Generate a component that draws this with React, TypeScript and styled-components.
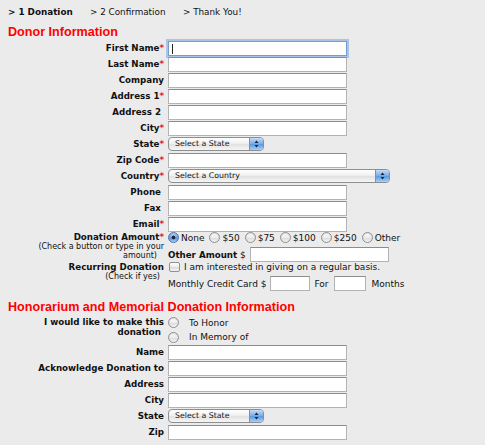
import React from "react";
import styled, { createGlobalStyle } from "styled-components";

const GlobalStyle = createGlobalStyle`
  html, body {
    margin: 0;
    padding: 0;
    background: #ebebeb;
  }
  body {
    font-family: "DejaVu Sans", Verdana, sans-serif;
    color: #111;
  }
`;

const Page = styled.div`
  box-sizing: border-box;
  width: 485px;
  height: 445px;
  overflow: hidden;
  padding: 6px 0 0 8px;
  background: #ebebeb;
`;

const Steps = styled.div`
  display: flex;
  height: 12px;
  line-height: 12px;
  font-size: 8.8px;
`;

const Step = styled.span<{ $active?: boolean; $w?: number }>`
  font-weight: ${(p) => (p.$active ? 700 : 400)};
  width: ${(p) => (p.$w ? `${p.$w}px` : "auto")};
  white-space: nowrap;
`;

const SectionTitle = styled.h2<{ $top?: number }>`
  margin: ${(p) => p.$top ?? 7}px 0 0;
  font: bold 12.6px/15px "Liberation Sans", Arial, sans-serif;
  color: #f00;
`;

const Row = styled.div<{ $align?: string }>`
  display: grid;
  grid-template-columns: 156px auto;
  column-gap: 4px;
  align-items: ${(p) => p.$align ?? "center"};
  min-height: 16px;
`;

const Label = styled.div<{ $pad?: number }>`
  text-align: right;
  font-weight: bold;
  font-size: 8.7px;
  line-height: 10px;
  white-space: nowrap;
  padding-top: ${(p) => p.$pad ?? 0}px;
`;

const Req = styled.span`
  color: #e3262b;
`;

const Note = styled.div<{ $right?: number }>`
  font-weight: normal;
  font-size: 8px;
  line-height: 9px;
  padding-right: ${(p) => p.$right ?? 0}px;
`;

const TextInput = styled.input<{ $w?: number; $focused?: boolean }>`
  box-sizing: border-box;
  display: block;
  width: ${(p) => p.$w ?? 179}px;
  height: 15px;
  margin: 0;
  padding: 0 3px;
  border: 1px solid #b3b3b3;
  border-top-color: #8c8c8c;
  background: #fff;
  font: 9px "DejaVu Sans", Verdana, sans-serif;
  outline: none;
  ${(p) =>
    p.$focused &&
    `
    border-color: #7b9cc8;
    box-shadow: 0 0 0 2px #a9c4e6;
    background: #fff linear-gradient(#222, #222) no-repeat 3px 2px / 1px 10px;
  `}
`;

const SelectBox = styled.div<{ $w: number }>`
  box-sizing: border-box;
  display: flex;
  align-items: stretch;
  width: ${(p) => p.$w}px;
  height: 14px;
  border: 1px solid #8e8e8e;
  border-radius: 4px;
  background: linear-gradient(#ffffff, #f0f0f0 45%, #e2e2e2 55%, #f6f6f6);
  font-size: 7.8px;
  color: #111;
  overflow: hidden;
`;

const SelectText = styled.span`
  flex: 1;
  padding-left: 6px;
  line-height: 12px;
  white-space: nowrap;
`;

const SelectArrows = styled.span`
  width: 13px;
  display: flex;
  align-items: center;
  justify-content: center;
  border-left: 1px solid #6f93c4;
  background: linear-gradient(#c3dbf6, #7fb0ea 45%, #5b9be3 55%, #a6d2fb);
`;

const Line = styled.div<{ $top?: number; $h?: number }>`
  display: flex;
  align-items: center;
  margin-top: ${(p) => p.$top ?? 0}px;
  height: ${(p) => p.$h ?? 15}px;
  font-size: 9px;
  white-space: nowrap;
`;

const Stack = styled.div`
  display: flex;
  flex-direction: column;
`;

const Choice = styled.label<{ $gap?: number }>`
  display: flex;
  align-items: center;
  margin-right: 5px;
  input {
    margin-right: ${(p) => p.$gap ?? 2}px;
  }
`;

const Radio = styled.input.attrs({ type: "radio", readOnly: true })`
  appearance: none;
  box-sizing: border-box;
  width: 11px;
  height: 11px;
  margin: 0;
  border-radius: 50%;
  border: 1px solid #8f8f8f;
  background: linear-gradient(#fdfdfd, #ececec 50%, #dcdcdc 55%, #f3f3f3);
  box-shadow: inset 0 1px 1px rgba(0, 0, 0, 0.12);
  &:checked {
    border-color: #4f76ad;
    background: radial-gradient(circle, #1d2a3e 0 1.5px, transparent 2.2px),
      linear-gradient(#bcd6f4, #79abe8 45%, #5595e0 55%, #a4d0fa);
  }
`;

const Check = styled.input.attrs({ type: "checkbox", readOnly: true })`
  appearance: none;
  box-sizing: border-box;
  width: 11px;
  height: 10px;
  margin: 0 4px 0 1px;
  border-radius: 2px;
  border: 1px solid #8f8f8f;
  background: linear-gradient(#fdfdfd, #ececec 50%, #dcdcdc 55%, #f3f3f3);
`;

const Bold = styled.b`
  font-size: 8.7px;
`;

const Spaced = styled.span<{ $l?: number; $r?: number }>`
  margin: 0 ${(p) => p.$r ?? 0}px 0 ${(p) => p.$l ?? 0}px;
`;

const Arrows = () => (
  <svg width="5" height="8" viewBox="0 0 5 8">
    <path d="M2.5 0.5 L4.5 3 L0.5 3 Z" fill="#1b2436" />
    <path d="M2.5 7.5 L4.5 5 L0.5 5 Z" fill="#1b2436" />
  </svg>
);

const Select = ({ w, text }: { w: number; text: string }) => (
  <SelectBox $w={w}>
    <SelectText>{text}</SelectText>
    <SelectArrows>
      <Arrows />
    </SelectArrows>
  </SelectBox>
);

const Field = ({
  label,
  req,
  trail,
  children,
}: {
  label: string;
  req?: boolean;
  trail?: boolean;
  children: React.ReactNode;
}) => (
  <Row>
    <Label>
      {label}
      {req && <Req>*</Req>}
      {trail && "\u00a0"}
    </Label>
    <div>{children}</div>
  </Row>
);

const amounts = ["None", "$50", "$75", "$100", "$250", "Other"];

export default function App() {
  return (
    <Page>
      <GlobalStyle />
      <Steps>
        <Step $active $w={82}>
          &gt; 1 Donation
        </Step>
        <Step $w={93}>&gt; 2 Confirmation</Step>
        <Step>&gt; Thank You!</Step>
      </Steps>

      <SectionTitle>Donor Information</SectionTitle>
      <Field label="First Name" req>
        <TextInput $focused />
      </Field>
      <Field label="Last Name" req>
        <TextInput />
      </Field>
      <Field label="Company">
        <TextInput />
      </Field>
      <Field label="Address 1" req>
        <TextInput />
      </Field>
      <Field label="Address 2" trail>
        <TextInput />
      </Field>
      <Field label="City" req>
        <TextInput />
      </Field>
      <Field label="State" req>
        <Select w={96} text="Select a State" />
      </Field>
      <Field label="Zip Code" req>
        <TextInput />
      </Field>
      <Field label="Country" req>
        <Select w={222} text="Select a Country" />
      </Field>
      <Field label="Phone" trail>
        <TextInput />
      </Field>
      <Field label="Fax" trail>
        <TextInput />
      </Field>
      <Field label="Email" req>
        <TextInput />
      </Field>

      <Row $align="start">
        <Label>
          Donation Amount<Req>*</Req>
          <Note>(Check a button or type in your</Note>
          <Note $right={7}>amount)</Note>
        </Label>
        <Stack>
          <Line $h={11}>
            {amounts.map((a, i) => (
              <Choice key={a}>
                <Radio name="amount" checked={i === 0} />
                {a}
              </Choice>
            ))}
          </Line>
          <Line $top={4}>
            <Bold>Other Amount</Bold>
            <Spaced $r={4}>&nbsp;$</Spaced>
            <TextInput $w={139} />
          </Line>
        </Stack>
      </Row>

      <Row $align="start">
        <Label>
          Recurring Donation
          <Note $right={4}>(Check if yes)</Note>
        </Label>
        <Stack>
          <Line $h={10}>
            <Check />I am interested in giving on a regular basis.
          </Line>
          <Line $top={4}>
            Monthly Credit Card $<Spaced $r={4} />
            <TextInput $w={40} />
            <Spaced $l={4} $r={5}>
              For
            </Spaced>
            <TextInput $w={32} />
            <Spaced $l={6}>Months</Spaced>
          </Line>
        </Stack>
      </Row>

      <SectionTitle $top={9}>Honorarium and Memorial Donation Information</SectionTitle>
      <Row $align="start">
        <Label $pad={2}>
          I would like to make this
          <br />
          donation&nbsp;
        </Label>
        <Stack>
          <Line>
            <Choice $gap={10}>
              <Radio name="honor" />
              To Honor
            </Choice>
          </Line>
          <Line $h={14}>
            <Choice $gap={10}>
              <Radio name="honor" />
              In Memory of
            </Choice>
          </Line>
        </Stack>
      </Row>
      <Field label="Name">
        <TextInput />
      </Field>
      <Field label="Acknowledge Donation to">
        <TextInput />
      </Field>
      <Field label="Address">
        <TextInput />
      </Field>
      <Field label="City">
        <TextInput />
      </Field>
      <Field label="State">
        <Select w={96} text="Select a State" />
      </Field>
      <Field label="Zip">
        <TextInput />
      </Field>
    </Page>
  );
}
